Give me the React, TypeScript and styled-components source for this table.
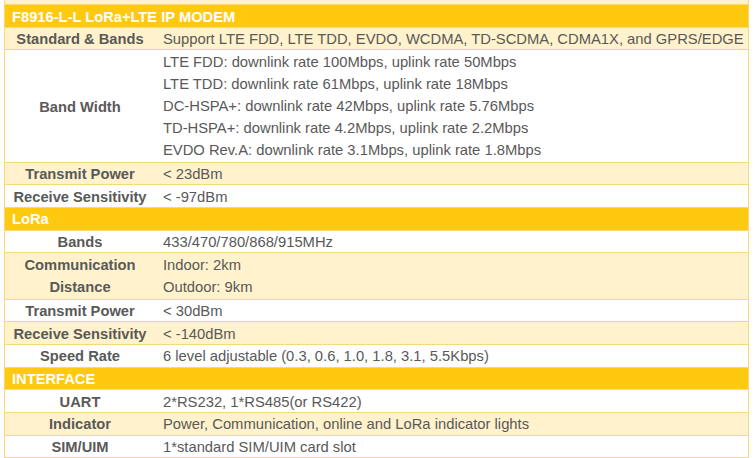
import React from 'react';
import styled, { createGlobalStyle } from 'styled-components';

const GlobalStyle = createGlobalStyle`
	html, body {
		margin: 0;
		padding: 0;
		background: #ffffff;
		overflow: hidden;
	}
	body {
		font-family: "Liberation Sans", Arial, sans-serif;
	}
`;

const Colors = {
	header: '#ffc90f',
	cream: '#fff2cc',
	white: '#ffffff',
	border: '#f9d87c',
	text: '#595959'
};

const Sheet = styled.div`
	width: 745px;
	margin-left: 4px;
	border-left: 1px solid ${Colors.border};
	border-right: 1px solid ${Colors.border};
	box-sizing: border-box;
`;

const TopStrip = styled.div`
	height: 4px;
	background-color: ${Colors.cream};
	border-bottom: 1px solid ${Colors.border};
`;

const SectionHeader = styled.div`
	height: 20.15px;
	line-height: 20.15px;
	padding: 1.5px 0 0 7px;
	background-color: ${Colors.header};
	border-bottom: 1px solid ${Colors.border};
	color: #ffffff;
	font-weight: bold;
	font-size: 14.7px;
`;

const Row = styled.div<{ $cream?: boolean }>`
	display: grid;
	grid-template-columns: 150px 1fr;
	background-color: ${props => (props.$cream ? Colors.cream : Colors.white)};
	border-bottom: 1px solid ${Colors.border};
	color: ${Colors.text};
`;

const Label = styled.div<{ $multi?: boolean }>`
	display: flex;
	flex-direction: column;
	justify-content: center;
	align-items: center;
	padding-top: 1.5px;
	font-weight: bold;
	font-size: 14.7px;
	line-height: ${props => (props.$multi ? '21.75px' : '20.15px')};
	text-align: center;
`;

const Value = styled.div<{ $multi?: boolean }>`
	padding: 1.5px 0 0 8px;
	font-size: 14.77px;
	line-height: ${props => (props.$multi ? '21.95px' : '20.15px')};
	white-space: nowrap;
`;

type Spec = { label: string[]; values: string[]; cream?: boolean };

const modem: Spec[] = [
	{
		label: ['Standard & Bands'],
		values: ['Support LTE FDD, LTE TDD, EVDO, WCDMA, TD-SCDMA, CDMA1X, and GPRS/EDGE'],
		cream: true
	},
	{
		label: ['Band Width'],
		values: [
			'LTE FDD: downlink rate 100Mbps, uplink rate 50Mbps',
			'LTE TDD: downlink rate 61Mbps, uplink rate 18Mbps',
			'DC-HSPA+: downlink rate 42Mbps, uplink rate 5.76Mbps',
			'TD-HSPA+: downlink rate 4.2Mbps, uplink rate 2.2Mbps',
			'EVDO Rev.A: downlink rate 3.1Mbps, uplink rate 1.8Mbps'
		]
	},
	{ label: ['Transmit Power'], values: ['< 23dBm'], cream: true },
	{ label: ['Receive Sensitivity'], values: ['< -97dBm'] }
];

const lora: Spec[] = [
	{ label: ['Bands'], values: ['433/470/780/868/915MHz'] },
	{ label: ['Communication', 'Distance'], values: ['Indoor: 2km', 'Outdoor: 9km'], cream: true },
	{ label: ['Transmit Power'], values: ['< 30dBm'] },
	{ label: ['Receive Sensitivity'], values: ['< -140dBm'], cream: true },
	{ label: ['Speed Rate'], values: ['6 level adjustable (0.3, 0.6, 1.0, 1.8, 3.1, 5.5Kbps)'] }
];

const iface: Spec[] = [
	{ label: ['UART'], values: ['2*RS232, 1*RS485(or RS422)'] },
	{ label: ['Indicator'], values: ['Power, Communication, online and LoRa indicator lights'], cream: true },
	{ label: ['SIM/UIM'], values: ['1*standard SIM/UIM card slot'] }
];

const SpecRow = ({ spec }: { spec: Spec }) => {
	const multi = spec.values.length > 1;
	return (
		<Row $cream={spec.cream}>
			<Label $multi={multi && spec.label.length > 1}>
				{spec.label.map(line => (
					<span key={line}>{line}</span>
				))}
			</Label>
			<Value $multi={multi}>
				{spec.values.map(line => (
					<div key={line}>{line}</div>
				))}
			</Value>
		</Row>
	);
};

const Section = ({ title, rows }: { title: string; rows: Spec[] }) => (
	<>
		<SectionHeader>{title}</SectionHeader>
		{rows.map(r => (
			<SpecRow key={r.label.join(' ')} spec={r} />
		))}
	</>
);

export default function App() {
	return (
		<>
			<GlobalStyle />
			<Sheet>
				<TopStrip />
				<Section title="F8916-L-L LoRa+LTE IP MODEM" rows={modem} />
				<Section title="LoRa" rows={lora} />
				<Section title="INTERFACE" rows={iface} />
			</Sheet>
		</>
	);
}
